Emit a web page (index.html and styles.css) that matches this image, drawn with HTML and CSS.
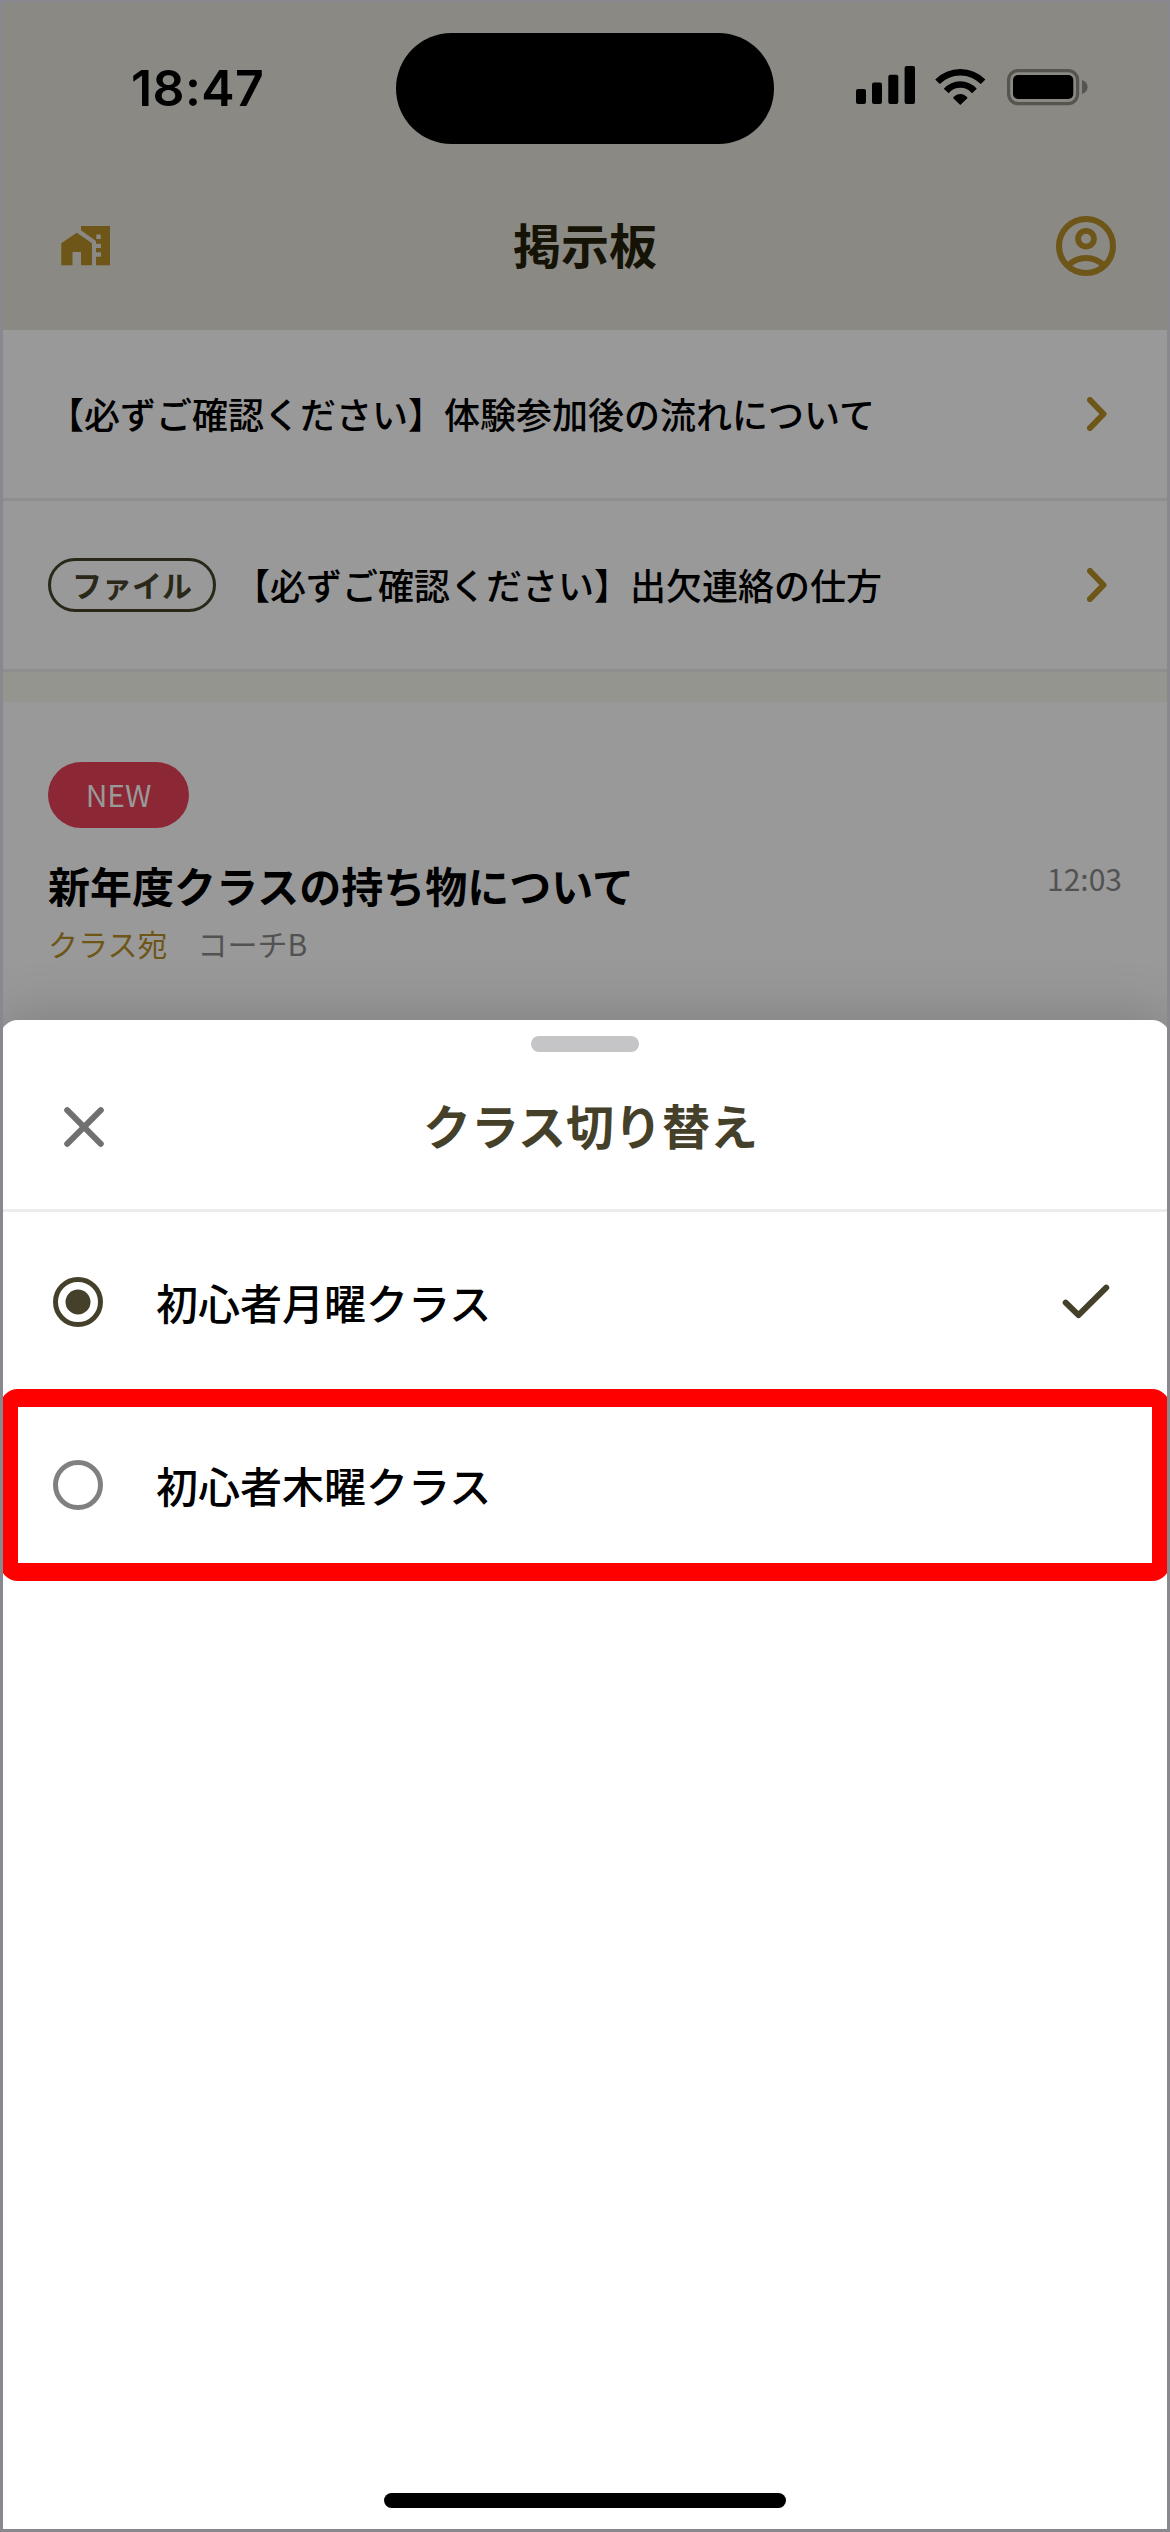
FILE: index.html
```
<!DOCTYPE html>
<html lang="ja">
<head>
<meta charset="utf-8">
<title>掲示板</title>
<link rel="stylesheet" href="styles.css">
</head>
<body>
<div class="screen">
  <header class="header">
    <div class="status">
      <span class="clock">18:47</span>
      <div class="island"></div>
      <svg class="status-icons" width="234" height="42" viewBox="855 65 234 42">
        <rect x="856" y="89" width="10" height="15" rx="2"/>
        <rect x="872" y="82.5" width="10" height="21.5" rx="2"/>
        <rect x="888.3" y="74.7" width="10" height="29.3" rx="2"/>
        <rect x="904.6" y="66" width="10.4" height="38" rx="2"/>
        <g fill="none" stroke="#000" stroke-width="6.4">
          <path d="M937.5 81.8Q947 72.200 960.300 72.200T983.100 81.800"/>
          <path d="M946.200 91Q952 84.500 960.300 84.500T974.400 91"/>
        </g>
        <path d="M953 98Q956 94 960.300 94T967.600 98L960.300 105Z"/>
        <rect x="1008.600" y="70.600" width="69" height="33" rx="9.500" fill="none" stroke="#55544f" stroke-width="3.200"/>
        <rect x="1013" y="75" width="60.300" height="24" rx="5"/>
        <path d="M1082 80Q1087.600 82 1087.600 87T1082 94Z" fill="#55544f"/>
      </svg>
    </div>
    <div class="nav">
      <svg width="50" height="40" viewBox="61 225 50 40" fill="#6e5518">
        <path d="M61.300 242.200L76.700 231.700L92 242.200V264.300H81V251H72.500V264.300H61.300Z"/>
        <path fill-rule="evenodd" d="M81 225H110V264.300H96V255.700H101V251.300H96V247H101V242.700H96V240L81 229.300ZM96.300 233.500V238H100.800V233.500Z"/>
      </svg>
      <h1 class="nav-title">掲示板</h1>
      <svg width="60" height="60" viewBox="0 0 60 60" fill="none" stroke="#6e5518" stroke-width="6">
        <circle cx="30" cy="30" r="27"/>
        <circle cx="30" cy="22.700" r="7.900" stroke-width="5.800"/>
        <path d="M11.500 50Q19.500 42 30 42T48.500 50"/>
      </svg>
    </div>
  </header>

  <ul class="pinned">
    <li class="pin">
      <span class="pin-text">【必ずご確認ください】体験参加後の流れについて</span>
      <svg class="chevron" width="20" height="34" viewBox="0 0 20 34"><path d="M3 3L16.500 17L3 31"/></svg>
    </li>
    <li class="pin">
      <span class="file-tag">ファイル</span>
      <span class="pin-text">【必ずご確認ください】出欠連絡の仕方</span>
      <svg class="chevron" width="20" height="34" viewBox="0 0 20 34"><path d="M3 3L16.500 17L3 31"/></svg>
    </li>
  </ul>

  <article class="post">
    <span class="new-tag">NEW</span>
    <div class="post-head">
      <h2 class="post-title">新年度クラスの持ち物について</h2>
      <time class="post-time">12:03</time>
    </div>
    <div class="post-meta"><span class="target">クラス宛</span><span>コーチB</span></div>
  </article>

  <section class="sheet">
    <div class="grip"></div>
    <div class="sheet-head">
      <svg class="close" width="40" height="40" viewBox="0 0 40 40"><path d="M3.200 3.200L36.800 36.800M36.800 3.200L3.200 36.800"/></svg>
      <h2 class="sheet-title">クラス切り替え</h2>
    </div>
    <div class="option">
      <svg width="50" height="50" viewBox="0 0 50 50"><circle cx="25" cy="25" r="22.500" fill="none" stroke="#454029" stroke-width="5"/><circle cx="25" cy="25" r="12.500" fill="#454029"/></svg>
      <span class="option-name">初心者月曜クラス</span>
      <svg class="check" width="48" height="36" viewBox="0 0 48 36"><path d="M3.700 18.700L16.500 31.200L44.200 3.700"/></svg>
    </div>
    <div class="option highlighted">
      <svg width="50" height="50" viewBox="0 0 50 50"><circle cx="25" cy="25" r="22.500" fill="none" stroke="#808080" stroke-width="5"/></svg>
      <span class="option-name">初心者木曜クラス</span>
    </div>
    <div class="home-bar"></div>
  </section>
</div>
</body>
</html>
```
FILE: styles.css
```
* { box-sizing: border-box; margin: 0; padding: 0; }
body {
  width: 1170px;
  height: 2532px;
  font-family: "Noto Sans CJK JP", sans-serif;
  color: #000;
}
svg { display: block; flex: none; }
.screen {
  position: relative;
  width: 1170px;
  height: 2532px;
  border: 3px solid #89888e;
  background: #999;
  overflow: hidden;
}

/* header */
.header { height: 327px; background: #8a8983; }
.status {
  display: flex;
  align-items: flex-start;
  height: 165px;
  padding: 30px 78px 0 128px;
}
.clock {
  width: 265px;
  font: 600 50px/60px Inter, sans-serif;
  letter-spacing: 0.4px;
  padding-top: 25px;
}
.island { width: 378px; height: 111px; border-radius: 56px; background: #000; }
.status-icons { margin: 32px 0 0 81px; }
.nav {
  display: flex;
  align-items: center;
  justify-content: space-between;
  height: 162px;
  padding: 0 51px 6px 58px;
}
.nav-title { padding: 0 0 6px 3px; font-size: 48px; line-height: 72px; font-weight: 700; color: #151306; }

/* pinned notices */
.pinned { list-style: none; border-bottom: 30px solid #94958e; }
.pin {
  display: flex;
  align-items: center;
  height: 171px;
  padding: 0 60px 0 45px;
  border-bottom: 3px solid #8e8e8e;
}
.pin-text { padding-bottom: 2px; font-size: 36px; line-height: 54px; font-weight: 500; white-space: nowrap; }
.chevron { margin-left: auto; fill: none; stroke: #6e5518; stroke-width: 6; stroke-linecap: round; stroke-linejoin: round; }
.file-tag {
  width: 168px;
  height: 54px;
  margin-right: 18px;
  border: 3px solid #2a2819;
  border-radius: 27px;
  font-size: 30px;
  line-height: 47px;
  font-weight: 700;
  text-align: center;
  color: #2a2819;
}

/* post */
.post { padding: 60px 45px 0; }
.new-tag {
  display: block;
  width: 141px;
  height: 66px;
  border-radius: 33px;
  background: #8c2835;
  color: #999;
  font-size: 30px;
  line-height: 64px;
  text-align: center;
}
.post-head { display: flex; justify-content: space-between; margin-top: 25px; }
.post-title { font-size: 42px; line-height: 63px; font-weight: 700; }
.post-time { font-size: 30px; line-height: 50px; color: #525252; }
.post-meta { display: flex; gap: 30px; font-size: 30px; line-height: 54px; color: #525252; }
.target { color: #6e5518; }

/* bottom sheet */
.sheet {
  position: absolute;
  top: 1017px;
  right: -3px;
  bottom: 0;
  left: -3px;
  display: flex;
  flex-direction: column;
  border-radius: 18px 18px 0 0;
  background: #fff;
  box-shadow: 0 0 60px rgba(0, 0, 0, 0.2);
}
.grip { width: 108px; height: 16px; margin: 16px auto 0; border-radius: 8px; background: #c5c5c7; }
.sheet-head {
  display: flex;
  align-items: center;
  height: 160px;
  padding: 0 64px 7px;
  border-bottom: 3px solid #ececec;
}
.close { fill: none; stroke: #707070; stroke-width: 6; stroke-linecap: round; }
.sheet-title { margin-left: 319px; padding-bottom: 6px; font-size: 48px; line-height: 72px; font-weight: 700; color: #454029; }
.option { display: flex; align-items: center; height: 177px; padding: 3px 60px 0 53px; }
.option-name { margin-left: 53px; padding-bottom: 2px; font-size: 42px; line-height: 63px; font-weight: 500; }
.check { margin-left: auto; fill: none; stroke: #454029; stroke-width: 6; stroke-linecap: round; stroke-linejoin: round; }
.highlighted { height: 192px; padding: 0 35px; border: 18px solid #f00; border-radius: 18px; }
.home-bar { width: 402px; height: 15px; margin: auto auto 21px; border-radius: 8px; background: #000; }
```
